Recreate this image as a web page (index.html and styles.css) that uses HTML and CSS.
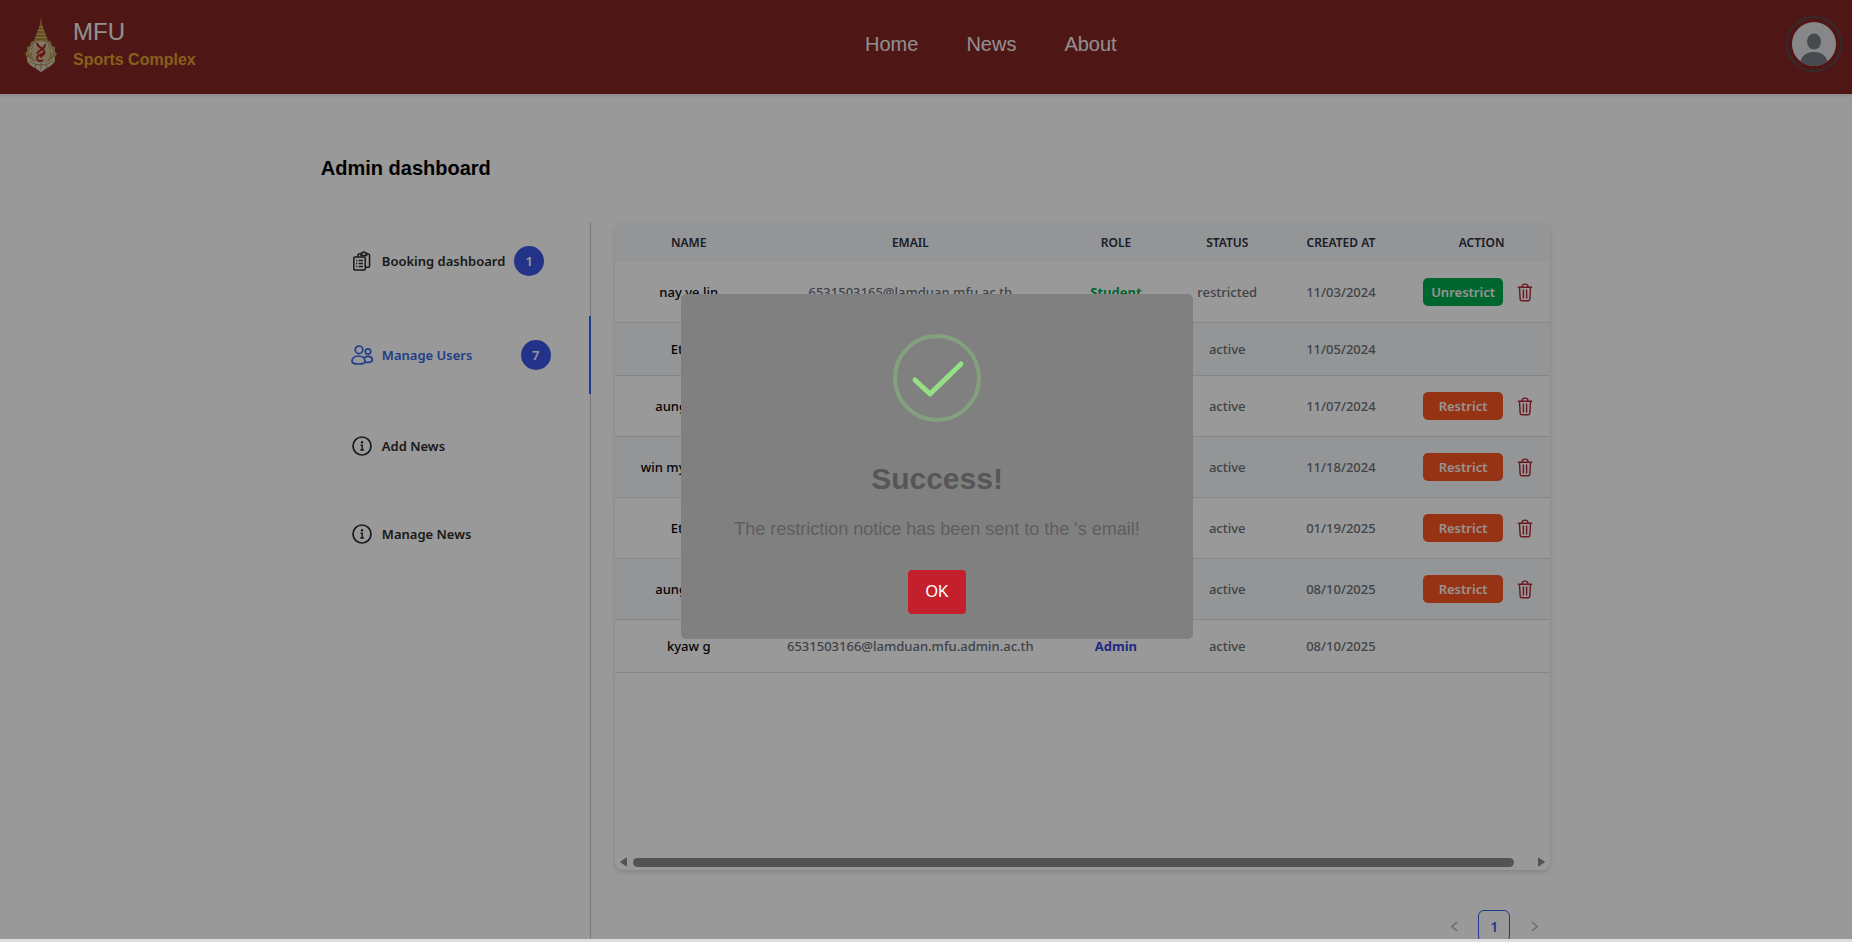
FILE: index.html
```html
<!DOCTYPE html>
<html lang="en">
<head>
<meta charset="utf-8">
<meta name="viewport" content="width=device-width, initial-scale=1">
<title>MFU Sports Complex - Admin dashboard</title>
<link rel="stylesheet" href="styles.css">
</head>
<body>
<svg class="sprite" aria-hidden="true">
  <symbol id="trash" viewBox="0 0 16 20">
    <path d="M1 4.500h14M4.800 4.200C4.800 2 6 1.200 8 1.200s3.200.8 3.200 3M2.200 4.800l.7 12.200c.1 1.200.7 1.700 1.900 1.700h6.400c1.200 0 1.800-.5 1.900-1.700l.7-12.200M6.300 7.300v8.500M9.700 7.300v8.500" fill="none" stroke="currentColor" stroke-width="1.500" stroke-linecap="round"/>
  </symbol>
  <symbol id="info" viewBox="0 0 20 20">
    <circle cx="10" cy="10" r="9" fill="none" stroke="currentColor" stroke-width="1.700"/>
    <circle cx="10" cy="6.300" r="1.200" fill="currentColor"/>
    <path d="M8.500 9.200h1.700v4.600M8.200 14h3.800" fill="none" stroke="currentColor" stroke-width="1.500"/>
  </symbol>
</svg>
<div class="app">
  <header class="topbar">
    <a class="brand" href="#">
      <svg class="crest" viewBox="0 0 32 56" aria-hidden="true">
        <path d="M16 0l1.200 9 5.800 15H9l5.800-15z" fill="#a8843a"/>
        <path d="M14 11h4M13 14.500h6M12 18h8M10.500 21.500h11" stroke="#dcc074" stroke-width="1.200"/>
        <path d="M10 24h12l4 2 1 4 3 1v4l2 3-2 3v5l-4 4-5 2-5 4-5-4-5-2-4-4v-5l-2-3 2-3v-4l3-1 1-4z" fill="#b89c5c"/>
        <path d="M16 25c-8 1-12 7-12 14 3-5 6-8 12-9 6 1 9 4 12 9 0-7-4-13-12-14z" fill="#d8cdb0"/>
        <ellipse cx="16" cy="38" rx="9" ry="9" fill="#cdbb8c"/>
        <path d="M12 27c0 5 8 5 7 9-1 3-7 2-7 6 0 3 3 4 6 2M20 28c1 5-7 6-8 10M20 36c-1 3-3 4-5 5" fill="none" stroke="#a8242a" stroke-width="2"/>
        <path d="M2 41c3 1 5 5 9 5l5 1 5-1c4 0 6-4 9-5-1 5-4 9-8 11l-6 4-6-4c-4-2-7-6-8-11z" fill="#d6cdb8"/>
        <path d="M5 45c3 3 7 4 11 4s8-1 11-4M16 47v7M11 48l-1 4M21 48l1 4M6 34l3-5M26 34l-3-5" fill="none" stroke="#a08448" stroke-width="1"/>
      </svg>
      <span class="brand-text">
        <span class="brand-name">MFU</span>
        <span class="brand-sub">Sports Complex</span>
      </span>
    </a>
    <nav class="links">
      <a href="#">Home</a>
      <a href="#">News</a>
      <a href="#">About</a>
    </nav>
    <button class="avatar" type="button" aria-label="Account">
      <svg viewBox="0 0 44 44" aria-hidden="true">
        <clipPath id="disc"><circle cx="22" cy="22" r="22"/></clipPath>
        <g clip-path="url(#disc)">
          <rect width="44" height="44" fill="#e1e2e4"/>
          <ellipse cx="22" cy="19.500" rx="7" ry="8" fill="#757c82"/>
          <path d="M8 44c0-9 5-14 14-14s14 5 14 14z" fill="#757c82"/>
        </g>
      </svg>
    </button>
  </header>

  <main class="page">
    <h1 class="title">Admin dashboard</h1>
    <div class="columns">
      <div class="tabs" role="tablist" aria-label="Admin sections">
        <button class="tab" type="button" role="tab">
          <svg class="tab-icon" viewBox="0 0 20 22" fill="none" stroke="currentColor" stroke-width="1.700" aria-hidden="true">
            <path d="M5.500 6V4.500c0-.8.500-1.300 1.300-1.300H9M15 3.200h2c.8 0 1.300.5 1.300 1.300v12c0 .8-.5 1.300-1.300 1.300h-3.300M9 2.600h1c.2-1 1-1.600 2-1.600s1.800.6 2 1.600h1V5H9z"/>
            <path d="M1 8c0-.8.500-1.300 1.300-1.300h10c.8 0 1.300.5 1.300 1.300v11.700c0 .8-.5 1.300-1.300 1.300h-10c-.8 0-1.300-.5-1.300-1.300z"/>
            <path d="M3.500 10.500h1.300M6.300 10.500h4.700M3.500 13.800h1.300M6.300 13.800h4.700M3.500 17.100h1.300M6.300 17.100h4.700"/>
          </svg>
          <span>Booking dashboard</span>
          <span class="badge">1</span>
        </button>
        <button class="tab active" type="button" role="tab" aria-selected="true">
          <svg class="tab-icon" viewBox="0 0 22 20" fill="none" stroke="currentColor" stroke-width="1.700" aria-hidden="true">
            <circle cx="8" cy="4.800" r="3.800"/>
            <circle cx="17" cy="6.500" r="2.700"/>
            <path d="M1 16.500c0-3.500 2.800-5.500 6.500-5.500s6.500 2 6.500 5.500c0 1.800-3 2.500-6.500 2.500s-6.500-.7-6.500-2.500zM13.500 12.500c1-.8 2-1.200 3.500-1.200 2.500 0 4.300 1.500 4.300 3.800 0 1.800-2 2.200-4.300 2.200h-2.500"/>
          </svg>
          <span>Manage Users</span>
          <span class="badge">7</span>
        </button>
        <button class="tab" type="button" role="tab">
          <svg class="tab-icon" aria-hidden="true"><use href="#info"/></svg>
          <span>Add News</span>
        </button>
        <button class="tab" type="button" role="tab">
          <svg class="tab-icon" aria-hidden="true"><use href="#info"/></svg>
          <span>Manage News</span>
        </button>
      </div>

      <section class="content">
        <div class="panel">
          <div class="table-view">
            <table class="users">
              <colgroup>
                <col class="c-name"><col class="c-email"><col class="c-role"><col class="c-status"><col class="c-date"><col class="c-action">
              </colgroup>
              <thead>
                <tr><th>Name</th><th>Email</th><th>Role</th><th>Status</th><th>Created at</th><th>Action</th></tr>
              </thead>
              <tbody>
                <tr class="tall"><td class="name">nay ye lin</td><td>6531503165@lamduan.mfu.ac.th</td><td class="student">Student</td><td>restricted</td><td>11/03/2024</td>
                  <td><div class="actions"><button class="act free" type="button">Unrestrict</button><button class="del" type="button" aria-label="Delete"><svg><use href="#trash"/></svg></button></div></td></tr>
                <tr><td class="name">Ethan</td><td></td><td></td><td>active</td><td>11/05/2024</td><td></td></tr>
                <tr class="tall"><td class="name">aung aung</td><td></td><td></td><td>active</td><td>11/07/2024</td>
                  <td><div class="actions"><button class="act" type="button">Restrict</button><button class="del" type="button" aria-label="Delete"><svg><use href="#trash"/></svg></button></div></td></tr>
                <tr class="tall"><td class="name">win myat naing</td><td></td><td></td><td>active</td><td>11/18/2024</td>
                  <td><div class="actions"><button class="act" type="button">Restrict</button><button class="del" type="button" aria-label="Delete"><svg><use href="#trash"/></svg></button></div></td></tr>
                <tr class="tall"><td class="name">Ethan</td><td></td><td></td><td>active</td><td>01/19/2025</td>
                  <td><div class="actions"><button class="act" type="button">Restrict</button><button class="del" type="button" aria-label="Delete"><svg><use href="#trash"/></svg></button></div></td></tr>
                <tr class="tall"><td class="name">aung aung</td><td></td><td></td><td>active</td><td>08/10/2025</td>
                  <td><div class="actions"><button class="act" type="button">Restrict</button><button class="del" type="button" aria-label="Delete"><svg><use href="#trash"/></svg></button></div></td></tr>
                <tr><td class="name">kyaw g</td><td>6531503166@lamduan.mfu.admin.ac.th</td><td class="admin">Admin</td><td>active</td><td>08/10/2025</td><td></td></tr>
              </tbody>
            </table>
          </div>
          <div class="scroll" aria-hidden="true">
            <svg viewBox="0 0 8 10"><path d="M7 1v8L1 5z"/></svg>
            <span class="track"><span class="thumb"></span></span>
            <svg viewBox="0 0 8 10"><path d="M1 1v8l6-4z"/></svg>
          </div>
        </div>
        <nav class="pager" aria-label="Pages">
          <button type="button" aria-label="Previous page"><svg viewBox="0 0 10 12"><path d="M8 1L2 6l6 5"/></svg></button>
          <button class="current" type="button">1</button>
          <button type="button" aria-label="Next page"><svg viewBox="0 0 10 12"><path d="M2 1l6 5-6 5"/></svg></button>
        </nav>
      </section>
    </div>
  </main>
</div>

<div class="overlay">
  <div class="dialog" role="dialog" aria-modal="true" aria-labelledby="dialog-title">
    <svg class="tick" viewBox="0 0 88 88" fill="none" aria-hidden="true">
      <circle cx="44" cy="44" r="42" stroke="#84a17f" stroke-width="4"/>
      <path d="M22 46l15 14 31-30" stroke="#95e085" stroke-width="5" stroke-linecap="round" stroke-linejoin="round"/>
    </svg>
    <h2 id="dialog-title">Success!</h2>
    <p>The restriction notice has been sent to the 's email!</p>
    <button class="ok" type="button">OK</button>
  </div>
</div>
</body>
</html>
```
FILE: styles.css
```css
* { box-sizing: border-box; }

body {
  margin: 0;
  height: 100vh;
  overflow: hidden;
  background: #dddddd;
  font-family: "Noto Sans", sans-serif;
}

button {
  border: 0;
  padding: 0;
  background: none;
  font: inherit;
  color: inherit;
}

a { color: inherit; text-decoration: none; }

.sprite { position: absolute; width: 0; height: 0; }

.app {
  height: calc(100vh - 3px);
  overflow: hidden;
  background: #ffffff;
}

/* Top bar */
.topbar {
  display: flex;
  align-items: flex-start;
  justify-content: space-between;
  height: 94px;
  padding: 16px 10px 0 25px;
  background: #842525;
  box-shadow: 0 1px 4px rgba(0, 0, 0, 0.15);
  font-family: "Liberation Sans", Arial, sans-serif;
}

.brand { display: flex; gap: 16px; }
.crest { width: 32px; height: 56px; }
.brand-text { display: flex; flex-direction: column; }
.brand-name { font-size: 24px; line-height: 32px; color: #f2f2f5; }
.brand-sub { font-size: 16px; line-height: 24px; font-weight: 700; color: #e0a030; }

.links {
  display: flex;
  gap: 48px;
  padding-top: 12px;
  font-size: 20px;
  line-height: 32px;
  color: #f2efef;
}

.avatar {
  display: block;
  width: 56px;
  height: 56px;
  padding: 4px;
  border: 2px solid #57494f;
  border-radius: 50%;
}
.avatar svg { display: block; width: 44px; height: 44px; }

/* Page */
.page {
  width: calc(66% + 7px);
  margin-left: calc(17% + 6px);
  padding-top: 60px;
}

.title {
  margin: 0;
  font: 700 20px/28px "Liberation Sans", Arial, sans-serif;
  color: #000000;
}

.columns {
  display: grid;
  grid-template-columns: 270px 1fr;
  gap: 24px;
  margin-top: 40px;
}

.tabs {
  display: flex;
  flex-direction: column;
  gap: 16px;
  height: 760px;
  border-right: 1px solid #c8c8c8;
}

.tab {
  display: flex;
  align-items: center;
  gap: 9px;
  margin-right: -1px;
  padding: 24px 38px 24px 30px;
  font-size: 13px;
  line-height: 24px;
  font-weight: 600;
  color: #2c2c2c;
}
.tab.active {
  border-right: 2px solid #2f66e6;
  color: #3468e4;
}
.tab-icon { width: 22px; height: 20px; }
.badge {
  width: 30px;
  height: 30px;
  border-radius: 50%;
  background: #3c55e6;
  color: #ffffff;
  font-size: 13px;
  line-height: 30px;
  font-weight: 600;
  text-align: center;
}
.active .badge { margin-left: auto; }

/* Users table */
.panel {
  display: flex;
  flex-direction: column;
  height: 647px;
  margin-top: 1px;
  border-radius: 8px;
  box-shadow: 0 2px 5px rgba(0, 0, 0, 0.14);
  overflow: hidden;
}
.table-view { flex: 1; overflow: hidden; }
.users {
  width: calc(100% + 12px);
  table-layout: fixed;
  border-collapse: separate;
  border-spacing: 0;
  font-size: 13px;
  line-height: 20px;
  text-align: center;
}
.c-name { width: 15.6%; }
.c-email { width: 31.2%; }
.c-role { width: 12.2%; }
.c-status { width: 11.3%; }
.c-date { width: 12.7%; }
.c-action { width: 17%; }

.users th {
  height: 39px;
  padding: 0;
  background: #f5f8fb;
  color: #2d3142;
  font-size: 12px;
  font-weight: 600;
  text-transform: uppercase;
}
.users td {
  height: 53px;
  padding: 0;
  border-bottom: 1px solid #dde1e5;
  color: #6b7078;
  font-weight: 500;
  white-space: nowrap;
}
.users .tall td { height: 61px; }
.users tbody tr:nth-child(even) { background: #f5f8fb; }
.users .name { color: #06080f; }
.users .student { color: #00a84f; font-weight: 700; }
.users .admin { color: #3a44dd; font-weight: 700; }

.actions {
  display: flex;
  align-items: center;
  gap: 14px;
  padding-left: 22px;
}
.act {
  width: 80px;
  height: 28px;
  border-radius: 5px;
  background: #f95522;
  color: #fff3ee;
  font-weight: 600;
}
.act.free { background: #00aa50; }
.del { color: #b22a38; }
.del svg { display: block; width: 16px; height: 19px; }

.scroll {
  display: flex;
  align-items: center;
  gap: 5px;
  height: 16px;
  padding: 0 4px;
}
.scroll svg { width: 9px; height: 10px; fill: #8a8a8a; stroke: #8a8a8a; stroke-linejoin: round; }
.track { flex: 1; }
.thumb { display: block; width: 98%; height: 9px; border-radius: 5px; background: #8a8a8a; }

.pager {
  display: flex;
  justify-content: flex-end;
  gap: 8px;
  margin-top: 40px;
  font-size: 14px;
}
.pager button { width: 32px; height: 32px; }
.pager svg { width: 9px; height: 11px; fill: none; stroke: #b0b0b0; stroke-width: 1.500; }
.pager .current {
  border: 1px solid #2f66e6;
  border-radius: 6px;
  color: #2f66e6;
  font-weight: 600;
}

/* Dialog */
.overlay {
  position: fixed;
  inset: 0 0 3px 0;
  display: flex;
  align-items: center;
  justify-content: center;
  padding: 0 0 6px 22px;
  background: rgba(0, 0, 0, 0.4);
}
.dialog {
  display: flex;
  flex-direction: column;
  align-items: center;
  width: 512px;
  padding: 40px 20px 25px;
  border-radius: 5px;
  background: #808080;
  font-family: "Liberation Sans", Arial, sans-serif;
}
.tick { width: 88px; height: 88px; }
.dialog h2 {
  margin: 39px 0 0;
  font-size: 30px;
  line-height: 36px;
  font-weight: 700;
  color: #565656;
}
.dialog p {
  margin: 20px 0 0;
  font-size: 18px;
  line-height: 24px;
  color: #5e5e5e;
}
.ok {
  width: 58px;
  height: 44px;
  margin-top: 29px;
  border-radius: 4px;
  background: #c4202c;
  color: #ffffff;
  font-size: 16px;
}
```
